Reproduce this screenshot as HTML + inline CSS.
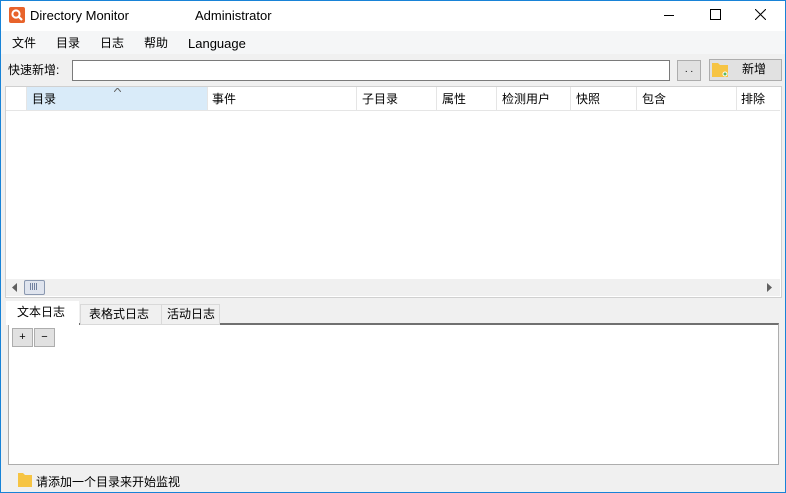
<html><head><style>
body{margin:0;width:786px;height:493px;position:relative;overflow:hidden;font-family:"Liberation Sans","Noto Sans CJK SC",sans-serif;font-size:12px;color:#000;background:#f0f0f0;line-height:15px}
.a{position:absolute}
.c{font-size:12px;margin-top:1px}
</style></head><body>
<div class="a" style="left:0;top:0;width:784px;height:491px;border:1px solid #1883d7"></div>
<div class="a" style="left:1px;top:1px;width:784px;height:30px;background:#fff"></div>
<svg class="a" style="left:9px;top:7px" width="16" height="16"><rect width="16" height="16" rx="2" fill="#e8632b"/><circle cx="7" cy="7" r="3.6" fill="none" stroke="#fff" stroke-width="2"/><path d="M9.5 9.5l3.5 3.5" stroke="#fff" stroke-width="2.2"/></svg>
<div class="a" style="left:30px;top:8px;font-size:13px">Directory Monitor</div>
<div class="a" style="left:195px;top:8px;font-size:13px">Administrator</div>
<div class="a" style="left:664px;top:15px;width:10px;height:1px;background:#000"></div>
<div class="a" style="left:710px;top:9px;width:9px;height:9px;border:1px solid #000"></div>
<svg class="a" style="left:755px;top:9px" width="11" height="11"><path d="M0 0L11 11M11 0L0 11" stroke="#000"/></svg>
<div class="a" style="left:1px;top:31px;width:784px;height:23px;background:#f5f6f7"></div>
<div class="a c" style="left:12px;top:35px">文件</div>
<div class="a c" style="left:56px;top:35px">目录</div>
<div class="a c" style="left:100px;top:35px">日志</div>
<div class="a c" style="left:144px;top:35px">帮助</div>
<div class="a" style="left:188px;top:36px;font-size:13px">Language</div>
<div class="a c" style="left:8px;top:62px">快速新增:</div>
<div class="a" style="left:72px;top:60px;width:596px;height:19px;background:#fff;border:1px solid #7a7a7a"></div>
<div class="a" style="left:677px;top:60px;width:22px;height:19px;background:#e1e1e1;border:1px solid #adadad;text-align:center;font-size:10px;line-height:17px">. .</div>
<div class="a" style="left:709px;top:59px;width:71px;height:20px;background:#e1e1e1;border:1px solid #adadad"></div>
<svg class="a" style="left:711px;top:61px" width="18" height="17"><path d="M1 2h6l2 2h8v12H1z" fill="#f6c443"/><circle cx="14" cy="13" r="2" fill="#5cb85c" stroke="#fff"/></svg>
<div class="a c" style="left:742px;top:61px">新增</div>
<div class="a" style="left:5px;top:86px;width:775px;height:210px;background:#fff;border:1px solid #d0d0d0"></div>
<div class="a" style="left:26px;top:87px;width:181px;height:23px;background:#d9ebf9;border-right:1px solid #e5e5e5"></div>
<svg class="a" style="left:114px;top:88px" width="7" height="4"><path d="M0 4L3.5 0L7 4" fill="none" stroke="#666"/></svg>
<div class="a" style="left:6px;top:87px;width:20px;height:23px;border-right:1px solid #e5e5e5"></div>
<div class="a" style="left:207px;top:87px;width:149px;height:23px;border-right:1px solid #e5e5e5"></div>
<div class="a" style="left:357px;top:87px;width:79px;height:23px;border-right:1px solid #e5e5e5"></div>
<div class="a" style="left:437px;top:87px;width:59px;height:23px;border-right:1px solid #e5e5e5"></div>
<div class="a" style="left:497px;top:87px;width:73px;height:23px;border-right:1px solid #e5e5e5"></div>
<div class="a" style="left:571px;top:87px;width:65px;height:23px;border-right:1px solid #e5e5e5"></div>
<div class="a" style="left:637px;top:87px;width:99px;height:23px;border-right:1px solid #e5e5e5"></div>
<div class="a" style="left:6px;top:110px;width:774px;height:1px;background:#e5e5e5"></div>
<div class="a c" style="top:91px;left:32px">目录</div>
<div class="a c" style="top:91px;left:212px">事件</div>
<div class="a c" style="top:91px;left:362px">子目录</div>
<div class="a c" style="top:91px;left:442px">属性</div>
<div class="a c" style="top:91px;left:502px">检测用户</div>
<div class="a c" style="top:91px;left:576px">快照</div>
<div class="a c" style="top:91px;left:642px">包含</div>
<div class="a c" style="top:91px;left:741px">排除</div>
<div class="a" style="left:6px;top:279px;width:774px;height:17px;background:#f0f0f0"></div>
<svg class="a" style="left:12px;top:283px" width="6" height="9"><path d="M5 0v9L0 4.5z" fill="#606060"/></svg>
<svg class="a" style="left:767px;top:283px" width="6" height="9"><path d="M0 0v9L5 4.5z" fill="#606060"/></svg>
<div class="a" style="left:24px;top:280px;width:19px;height:13px;background:#dfe4ee;border:1px solid #8a98b0;border-radius:2px"></div>
<div class="a" style="left:30px;top:283px;width:7px;height:7px;background:repeating-linear-gradient(90deg,#7080a0 0 1px,transparent 1px 2px)"></div>
<div class="a" style="left:8px;top:323px;width:769px;height:139px;background:#fff;border:1px solid #adadad;border-top:2px solid #707070"></div>
<div class="a" style="left:80px;top:304px;width:80px;height:19px;background:#f0f0f0;border:1px solid #d9d9d9"></div>
<div class="a" style="left:161px;top:304px;width:57px;height:19px;background:#f0f0f0;border:1px solid #d9d9d9"></div>
<div class="a" style="left:6px;top:301px;width:73px;height:24px;background:#fff"></div>
<div class="a c" style="left:17px;top:304px">文本日志</div>
<div class="a c" style="left:89px;top:306px">表格式日志</div>
<div class="a c" style="left:167px;top:306px">活动日志</div>
<div class="a" style="left:12px;top:328px;width:19px;height:17px;background:#e1e1e1;border:1px solid #adadad;text-align:center;line-height:16px;font-size:11px">+</div>
<div class="a" style="left:34px;top:328px;width:19px;height:17px;background:#e1e1e1;border:1px solid #adadad;text-align:center;line-height:16px;font-size:11px">−</div>
<svg class="a" style="left:17px;top:472px" width="16" height="16"><path d="M1 1h5l2 2h7v12H1z" fill="#f6c443"/></svg>
<div class="a c" style="left:36px;top:474px">请添加一个目录来开始监视</div>
</body></html>
